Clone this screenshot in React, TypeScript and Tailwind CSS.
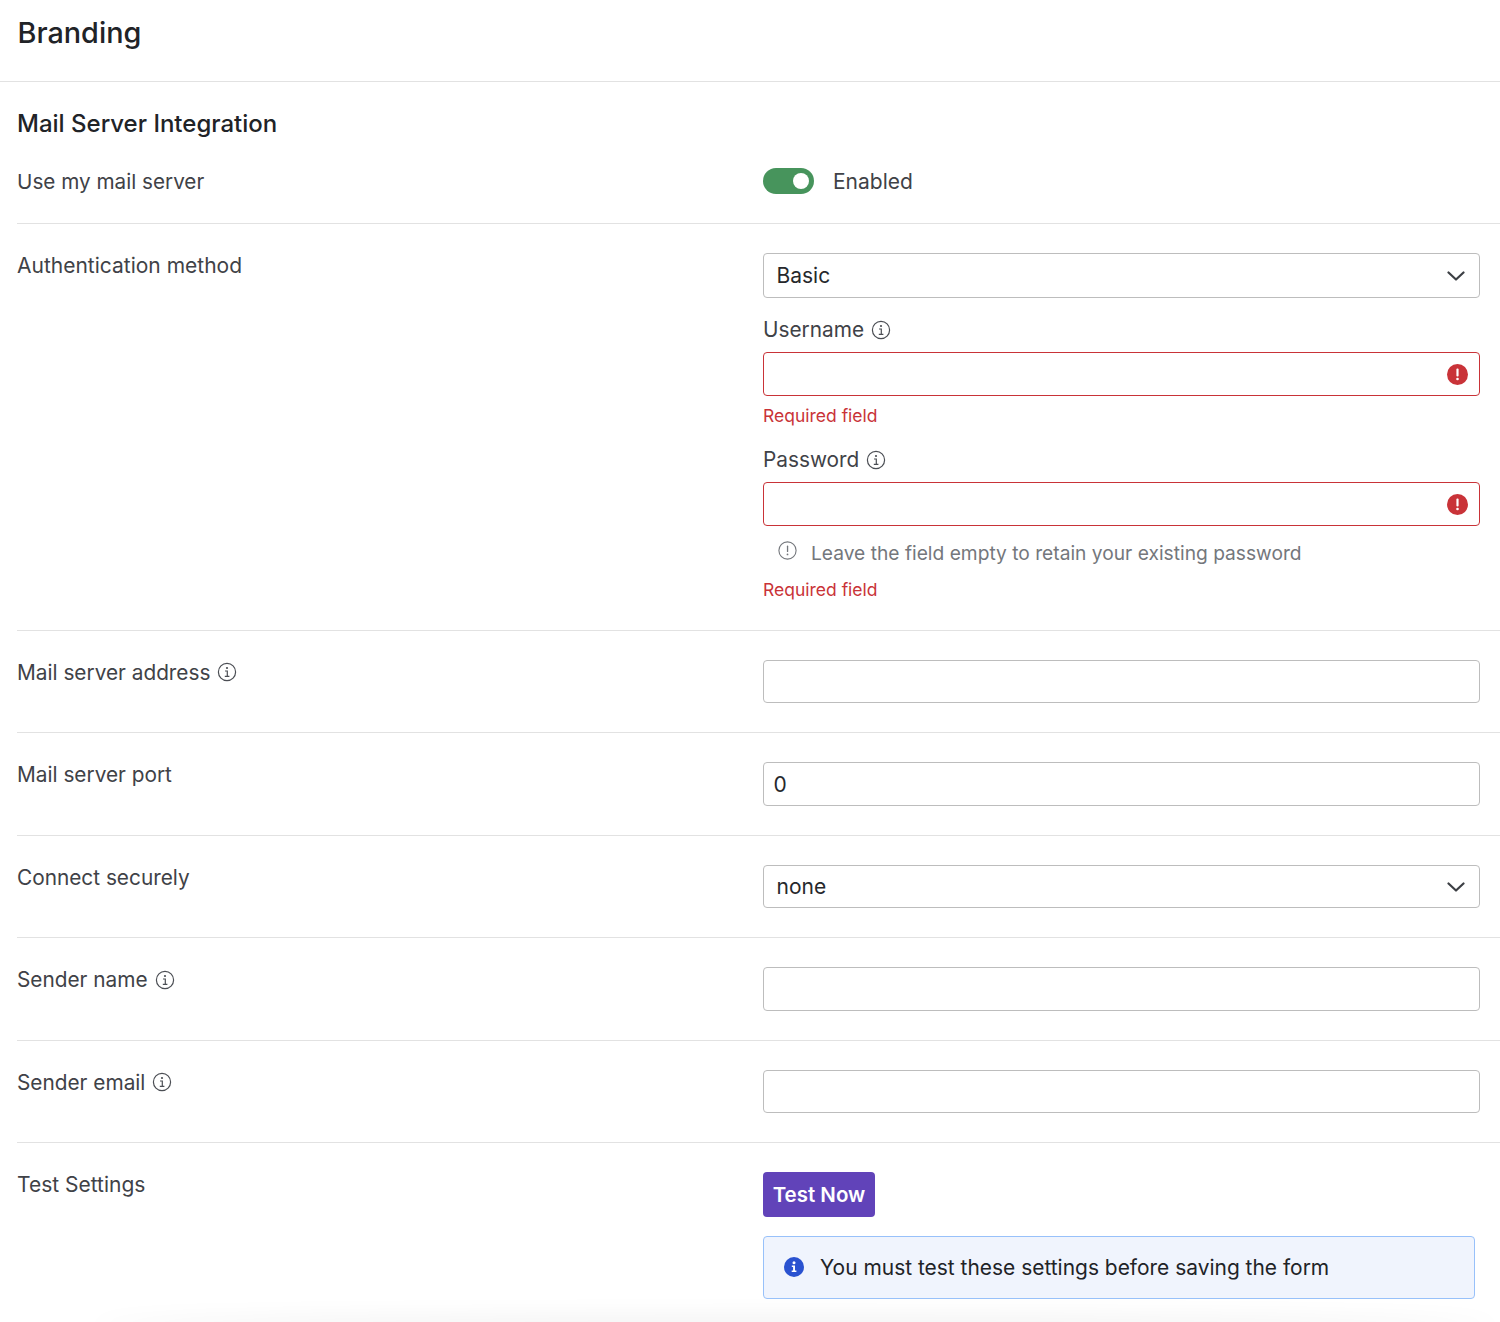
function InfoIcon({ size = 20 }: { size?: number }) {
  return (
    <svg width={size} height={size} viewBox="0 0 20 20" fill="none" className="shrink-0 text-[#4b4e54]">
      <circle cx="10" cy="10" r="8.6" stroke="currentColor" strokeWidth="1.2" />
      <circle cx="10" cy="6" r="1.1" fill="currentColor" />
      <path d="M8 9h2.3v5.2M7.8 14.4h4.6" stroke="currentColor" strokeWidth="1.2" />
    </svg>
  );
}

function Chevron() {
  return (
    <svg width="18" height="12" viewBox="0 0 18 12" fill="none" className="shrink-0 text-[#3c3f44]">
      <path d="M1.5 2.5 9 9.5l7.5-7" stroke="currentColor" strokeWidth="2.2" strokeLinecap="round" strokeLinejoin="round" />
    </svg>
  );
}

function ErrorIcon() {
  return (
    <svg width="21" height="21" viewBox="0 0 21 21" className="shrink-0">
      <circle cx="10.5" cy="10.5" r="10.5" fill="#c93338" />
      <rect x="9.4" y="4.6" width="2.2" height="7.8" rx="1" fill="#fff" />
      <circle cx="10.5" cy="15" r="1.3" fill="#fff" />
    </svg>
  );
}

function Row({ label, info, children }: { label: string; info?: boolean; children: React.ReactNode }) {
  return (
    <div className="flex border-b border-[#e2e2e2] pt-[29px] pb-[29px] pr-5">
      <div className="flex h-[25px] w-[746px] shrink-0 items-center gap-[7px] text-[20.8px] text-[#3f4247]">
        <span>{label}</span>
        {info && <InfoIcon />}
      </div>
      <div className="min-w-0 flex-1">{children}</div>
    </div>
  );
}

function TextField({ value, error }: { value?: string; error?: boolean }) {
  return (
    <div className={`flex items-center rounded-[4px] border bg-white pl-[9.5px] pr-[11px] text-[#26282c] ${error ? "h-[44px] border-[#c93338]" : "h-[43.5px] border-[#bdbdbd]"}`}>
      <span className="flex-1">{value}</span>
      {error && <ErrorIcon />}
    </div>
  );
}

function SelectField({ value, tall }: { value: string; tall?: boolean }) {
  return (
    <div className={`flex items-center rounded-[4px] border border-[#bdbdbd] bg-white pl-[12.5px] pr-[14px] text-[#26282c] ${tall ? "h-[45px]" : "h-[43.5px]"}`}>
      <span className="flex-1">{value}</span>
      <Chevron />
    </div>
  );
}

function FieldLabel({ text }: { text: string }) {
  return (
    <div className="flex h-[25px] items-center gap-[7px] text-[20.8px] text-[#3f4247]">
      <span>{text}</span>
      <InfoIcon />
    </div>
  );
}

function RequiredText() {
  return <div className="h-[24px] text-[17.5px] leading-[24px] text-[#c93338]">Required field</div>;
}

export default function App() {
  return (
    <div className="relative h-[1322px] overflow-hidden bg-white text-[21px] leading-[25px] font-['Inter',sans-serif]">
      <div className="flex h-[82px] items-start border-b border-[#e2e2e2] pl-[17.5px] pt-[14px]">
        <h1 className="text-[28.8px] leading-[38px] font-medium text-[#212327]">Branding</h1>
      </div>

      <div className="pl-[17px]">
        <h2 className="pt-[26px] text-[24px] leading-[32px] font-medium text-[#212327]">Mail Server Integration</h2>

        <div className="flex border-b border-[#e2e2e2] pt-[28px] pb-[29px] pr-5">
          <div className="mt-[1px] h-[25px] w-[746px] shrink-0 text-[20.7px] text-[#3f4247]">Use my mail server</div>
          <div className="flex h-[26px] items-center gap-[19px] text-[#3f4247]">
            <div className="flex h-[26px] w-[51px] items-center justify-end rounded-full bg-[#47945c] pr-[5px]">
              <div className="h-[16px] w-[16px] rounded-full bg-white" />
            </div>
            <span>Enabled</span>
          </div>
        </div>

        <div className="flex border-b border-[#e2e2e2] pt-[29px] pb-[27.98px] pr-5">
          <div className="h-[25px] w-[746px] shrink-0 text-[#3f4247]">Authentication method</div>
          <div className="min-w-0 flex-1">
            <SelectField value="Basic" tall />
            <div className="mt-[19px] mb-[10px]">
              <FieldLabel text="Username" />
            </div>
            <TextField error />
            <div className="mt-[8px]">
              <RequiredText />
            </div>
            <div className="mt-[19px] mb-[10px]">
              <FieldLabel text="Password" />
            </div>
            <TextField error />
            <div className="mt-[15px] flex h-[25px] items-center pl-[15px] text-[19.2px] text-[#74777c]">
              <svg width="19" height="19" viewBox="0 0 19 19" fill="none" className="mr-[14px] -mt-[7px] shrink-0 text-[#74777c]">
                <circle cx="9.5" cy="9.5" r="8.6" stroke="currentColor" strokeWidth="1.1" />
                <rect x="8.9" y="4.6" width="1.3" height="6.4" rx="0.6" fill="currentColor" />
                <circle cx="9.5" cy="13.4" r="0.9" fill="currentColor" />
              </svg>
              <span>Leave the field empty to retain your existing password</span>
            </div>
            <div className="mt-[12px]">
              <RequiredText />
            </div>
          </div>
        </div>

        <Row label="Mail server address" info>
          <TextField />
        </Row>
        <Row label="Mail server port">
          <TextField value="0" />
        </Row>
        <Row label="Connect securely">
          <SelectField value="none" />
        </Row>
        <Row label="Sender name" info>
          <TextField />
        </Row>
        <Row label="Sender email" info>
          <TextField />
        </Row>

        <div className="flex pt-[28.5px] pr-5">
          <div className="h-[25px] w-[746px] shrink-0 text-[#3f4247]">Test Settings</div>
          <div className="min-w-0 flex-1">
            <button className="flex h-[45px] w-[112px] items-center justify-center rounded-[4px] bg-[#6143b9] text-[20.5px] font-semibold text-white">
              Test Now
            </button>
            <div className="mt-[19px] mr-[5px] flex h-[63px] items-center rounded-[4px] border border-[#98c1fa] bg-[#f0f4fd] pl-[20px] text-[20.95px] text-[#212327]">
              <svg width="20" height="20" viewBox="0 0 20 20" className="mr-[16px] shrink-0">
                <circle cx="10" cy="10" r="10" fill="#2a52d0" />
                <circle cx="10" cy="5.8" r="1.5" fill="#fff" />
                <path d="M7.8 8.6h3.2v5h1.4v1.5H7.7v-1.5h1.4V10H7.8z" fill="#fff" />
              </svg>
              <span>You must test these settings before saving the form</span>
            </div>
          </div>
        </div>
      </div>

      {/* soft shadow of the footer bar below the fold */}
      <div className="absolute right-0 bottom-[-16px] left-[90px] h-[16px] rounded-[50%] shadow-[0_-4px_24px_rgba(0,0,0,0.07)]" />
    </div>
  );
}
